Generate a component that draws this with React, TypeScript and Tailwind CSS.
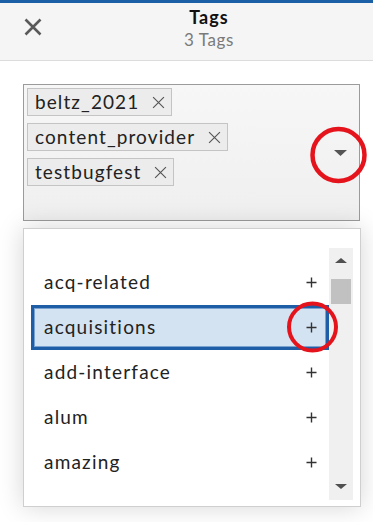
import React from "react";

function XIcon({ size, stroke, color }: { size: number; stroke: number; color: string }) {
  return (
    <svg width={size} height={size} viewBox="0 0 18 18">
      <path d="M1.5 1.5 L16.5 16.5 M16.5 1.5 L1.5 16.5" stroke={color} strokeWidth={stroke} strokeLinecap="butt" />
    </svg>
  );
}

function Plus() {
  return (
    <svg width="11" height="11" viewBox="0 0 11 11">
      <path d="M5.5 0.5 V10.5 M0.5 5.5 H10.5" stroke="#333" strokeWidth="1.4" />
    </svg>
  );
}

function Tri({ up, w, h, color }: { up?: boolean; w: number; h: number; color: string }) {
  return (
    <svg width={w} height={h} viewBox={`0 0 ${w} ${h}`}>
      <polygon points={up ? `0,${h} ${w},${h} ${w / 2},0` : `0,0 ${w},0 ${w / 2},${h}`} fill={color} />
    </svg>
  );
}

export default function App() {
  const chips = ["beltz_2021", "content_provider", "testbugfest"];
  const items = ["acq-related", "acquisitions", "add-interface", "alum", "amazing"];
  return (
    <div className="relative w-[373px] h-[522px] overflow-hidden bg-white font-['Lato','Noto_Sans',sans-serif]">
      <div className="h-[3px] bg-[#1b5fa6]" />
      <div className="flex h-[58px] border-b border-[#dcdcdc] bg-[#f5f5f5]">
        <div className="w-[45px] pl-[24px] pt-[15px]">
          <XIcon size={18} stroke={2.6} color="#5a5a5a" />
        </div>
        <div className="flex flex-1 flex-col items-center pt-[3px]">
          <div className="text-[18px] font-bold leading-[22px] tracking-[1px] text-[#111]">Tags</div>
          <div className="mt-[2px] text-[17px] leading-[20px] tracking-[0.6px] text-[#7a7a7a]">3 Tags</div>
        </div>
      </div>

      <div className="ml-[23px] mt-[23px] flex h-[137px] w-[337px] items-center border border-[#9b9b9b] bg-gradient-to-b from-[#f7f7f7] to-[#efefef]">
        <div className="flex flex-1 flex-col items-start gap-[7px] self-start pl-[3px] pt-[3px]">
          {chips.map((c) => (
            <div
              key={c}
              className="flex h-[28px] items-center border border-[#c4c4c4] bg-[#ececec] pl-[7px] pr-[6px] text-[19px] tracking-[1.1px] text-[#222]"
            >
              <span>{c}</span>
              <span className="ml-[13px] flex items-center">
                <XIcon size={13} stroke={1.6} color="#555" />
              </span>
            </div>
          ))}
        </div>
        <div className="mr-[12px] flex items-center">
          <Tri w={13} h={6} color="#555" />
        </div>
      </div>

      <div className="ml-[23px] mt-[7px] flex h-[279px] w-[338px] border border-[#cfcfcf] bg-white pl-[7px] pr-[7px] pt-[19px] shadow-[0_0_24px_rgba(0,0,0,0.17)]">
        <div className="h-[252px] flex-1 overflow-hidden pt-[12px]">
          {items.map((it) => {
            const sel = it === "acquisitions";
            return (
              <div
                key={it}
                className={
                  sel
                    ? "flex h-[45px] items-center justify-between border-[3px] border-[#1d5ea6] bg-[#d4e3f2] pl-[10px] pr-[9px] text-[19px] tracking-[1.2px] text-[#222] shadow-[inset_0_0_0_1px_#7aa2d0]"
                    : "flex h-[45px] items-center justify-between border-[3px] border-transparent pl-[10px] pr-[9px] text-[19px] tracking-[1.2px] text-[#222]"
                }
              >
                <span>{it}</span>
                <Plus />
              </div>
            );
          })}
        </div>
        <div className="flex h-[252px] w-[24px] flex-col items-center bg-[#f0f0f0] pb-[11px] pt-[10px]">
          <Tri up w={12} h={5} color="#505050" />
          <div className="mt-[16px] h-[25px] w-[20px] bg-[#c1c1c1]" />
          <div className="flex-1" />
          <Tri w={12} h={5} color="#505050" />
        </div>
      </div>

      <svg className="pointer-events-none absolute left-0 top-0" width="373" height="522">
        <ellipse cx="338.5" cy="155" rx="26" ry="26" fill="none" stroke="#e5141c" strokeWidth="4.5" />
        <ellipse cx="312.5" cy="327" rx="23.5" ry="23.5" fill="none" stroke="#e5141c" strokeWidth="4" />
      </svg>
    </div>
  );
}
